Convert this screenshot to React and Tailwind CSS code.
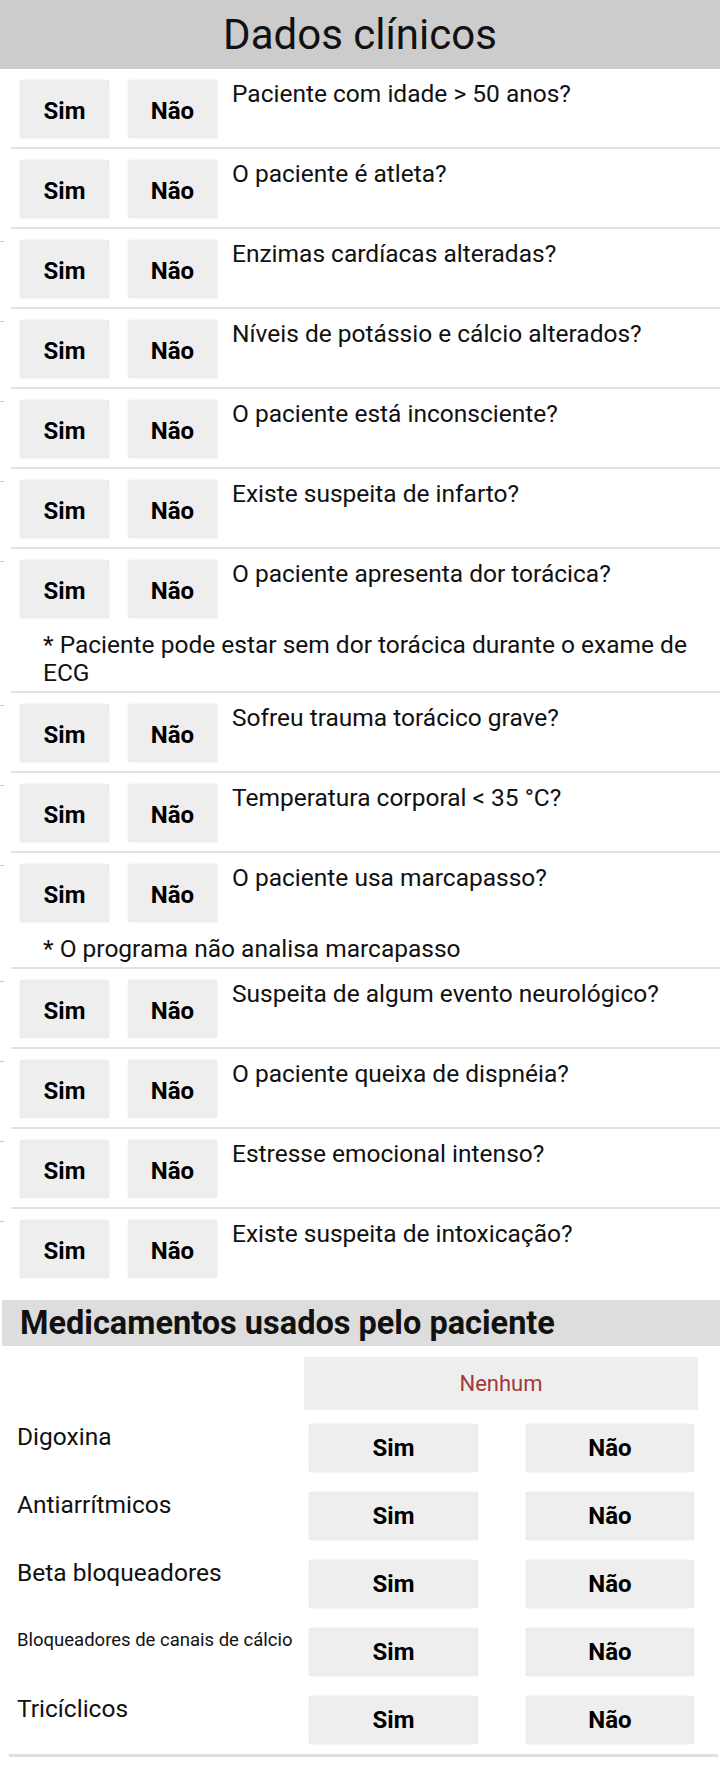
import React from "react";

const questions = [
  { q: "Paciente com idade > 50 anos?", mark: false },
  { q: "O paciente é atleta?", mark: false },
  { q: "Enzimas cardíacas alteradas?", mark: true },
  { q: "Níveis de potássio e cálcio alterados?", mark: true },
  { q: "O paciente está inconsciente?", mark: true },
  { q: "Existe suspeita de infarto?", mark: true },
  {
    q: "O paciente apresenta dor torácica?",
    mark: true,
    note: "* Paciente pode estar sem dor torácica durante o exame de ECG",
  },
  { q: "Sofreu trauma torácico grave?", mark: true },
  { q: "Temperatura corporal < 35 °C?", mark: true },
  { q: "O paciente usa marcapasso?", mark: true, note: "* O programa não analisa marcapasso" },
  { q: "Suspeita de algum evento neurológico?", mark: true },
  { q: "O paciente queixa de dispnéia?", mark: true },
  { q: "Estresse emocional intenso?", mark: true },
  { q: "Existe suspeita de intoxicação?", mark: true, last: true },
];

const meds = [
  { name: "Digoxina", small: false },
  { name: "Antiarrítmicos", small: false },
  { name: "Beta bloqueadores", small: false },
  { name: "Bloqueadores de canais de cálcio", small: true },
  { name: "Tricíclicos", small: false },
];

function SmallBtn({ children }) {
  return (
    <div className="w-[89px] h-[58px] shrink-0 rounded-[3px] bg-[#eeeeee] shadow-[0_0_1px_rgba(0,0,0,0.3)] flex items-center justify-center pt-[3px] text-[24px] font-bold text-black leading-none">
      {children}
    </div>
  );
}

function MedBtn({ children, w }) {
  return (
    <div
      className={`${w} h-[48px] shrink-0 rounded-[3px] bg-[#eeeeee] shadow-[0_0_1px_rgba(0,0,0,0.3)] flex items-center justify-center text-[24px] font-bold text-black leading-none`}
    >
      {children}
    </div>
  );
}

function Separator() {
  return <div className="ml-[11px] h-[2px] bg-[#e2e2e2]" />;
}

function QuestionRow({ item }) {
  return (
    <div>
      <div className={`flex items-start pt-[11px] ${item.note || item.last ? "pb-0" : "pb-[9px]"}`}>
        <div className="w-[4px] shrink-0 pt-[1px]">
          {item.mark && <div className="h-[1px] w-[4px] bg-[#c8c8c8]" />}
        </div>
        <div className="ml-[16px] flex gap-[19px]">
          <SmallBtn>Sim</SmallBtn>
          <SmallBtn>Não</SmallBtn>
        </div>
        <div className="ml-[15px] text-[24.5px] leading-[28px] text-[#111111]">{item.q}</div>
      </div>
      {item.note && (
        <div className="pl-[43px] pr-[8px] pt-[13px] pb-[4px] text-[24.5px] leading-[28px] text-[#111111]">
          {item.note}
        </div>
      )}
      {!item.last && <Separator />}
    </div>
  );
}

export default function App() {
  return (
    <div className="w-[720px] min-h-[1766px] bg-white font-['Roboto',sans-serif] text-black">
      <div className="h-[69px] bg-[#cccccc] flex items-center justify-center text-[42px] leading-none text-[#111111]">
        Dados clínicos
      </div>

      <div>
        {questions.map((item, i) => (
          <QuestionRow key={i} item={item} />
        ))}
      </div>

      <div className="mt-[22px] ml-[2px] h-[46px] bg-[#dddddd] flex items-center pl-[18px] text-[32.5px] font-bold leading-none text-[#111111]">
        Medicamentos usados pelo paciente
      </div>

      <div className="mt-[11px] ml-[304px] w-[394px] h-[53px] bg-[#eeeeee] flex items-center justify-center text-[22px] text-[#a33838]">
        Nenhum
      </div>

      <div className="mt-[14px] flex flex-col gap-[20px]">
        {meds.map((m, i) => (
          <div key={i} className="flex items-start pl-[17px]">
            <div
              className={`w-[292px] shrink-0 text-[#111111] ${
                m.small ? "text-[18.5px] leading-[22px] pt-[1px]" : "text-[24.5px] leading-[28px] -mt-[1px]"
              }`}
            >
              {m.name}
            </div>
            <MedBtn w="w-[169px]">Sim</MedBtn>
            <div className="ml-[48px]">
              <MedBtn w="w-[168px]">Não</MedBtn>
            </div>
          </div>
        ))}
      </div>

      <div className="mt-[10px] ml-[9px] mr-[2px] h-[3px] bg-[#e0e0e0]" />
    </div>
  );
}
